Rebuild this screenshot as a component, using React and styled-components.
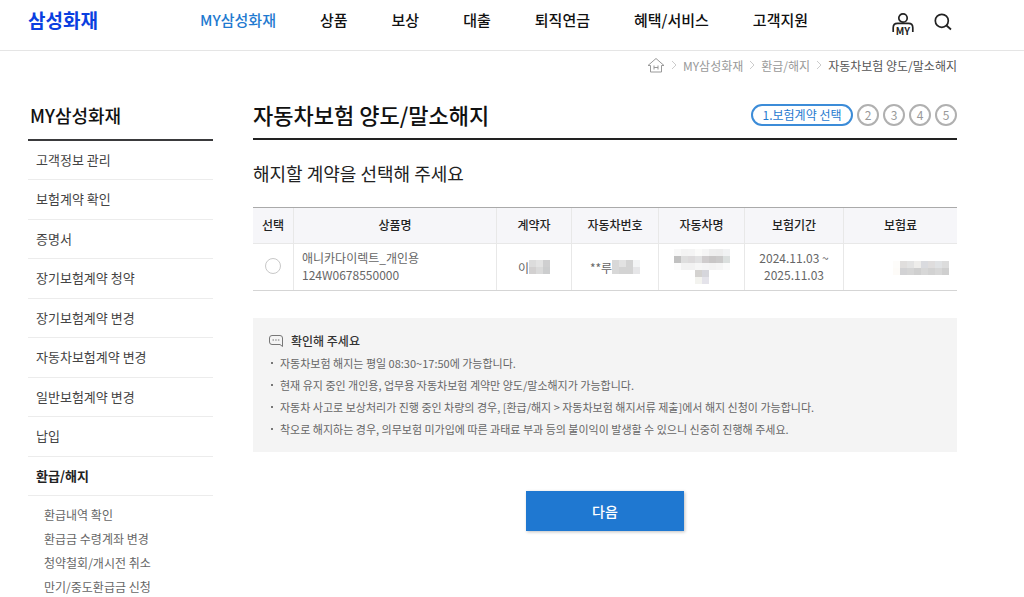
import styled, { createGlobalStyle } from 'styled-components';
import { useState } from 'react';

const navItems = ['MY삼성화재', '상품', '보상', '대출', '퇴직연금', '혜택/서비스', '고객지원'];

const sideMenus = [
  '고객정보 관리',
  '보험계약 확인',
  '증명서',
  '장기보험계약 청약',
  '장기보험계약 변경',
  '자동차보험계약 변경',
  '일반보험계약 변경',
  '납입',
  '환급/해지',
];

const subMenus = ['환급내역 확인', '환급금 수령계좌 변경', '청약철회/개시전 취소', '만기/중도환급금 신청'];

const columns = [
  { name: '선택', width: 40 },
  { name: '상품명', width: 203 },
  { name: '계약자', width: 75 },
  { name: '자동차번호', width: 87 },
  { name: '자동차명', width: 86 },
  { name: '보험기간', width: 99 },
  { name: '보험료', width: 114 },
];

const notices = [
  '자동차보험 해지는 평일 08:30~17:50에 가능합니다.',
  '현재 유지 중인 개인용, 업무용 자동차보험 계약만 양도/말소해지가 가능합니다.',
  '자동차 사고로 보상처리가 진행 중인 차량의 경우, [환급/해지 > 자동차보험 해지서류 제출]에서 해지 신청이 가능합니다.',
  '착오로 해지하는 경우, 의무보험 미가입에 따른 과태료 부과 등의 불이익이 발생할 수 있으니 신중히 진행해 주세요.',
];

// 개인정보 마스킹 (한 칸 = 7px)
const maskOwner = [
  ['#dcdcdc', '#e3e3e3', '#cfcfd0'],
  ['#d2d0d0', '#dadada', '#cccdce'],
];
const maskNumber = [
  ['#d8d8d8', '#e2e2e2', '#d3d3d3', '#f3f4f5'],
  ['#d8d8d8', '#d3d3d3', '#d3d3d3', '#e6e6e8'],
];
const maskCar = [
  ['#f8f8f8', '#f3f3f3', '#f4f4f4', '#fafaf9', '#f5f5f5', '#eeeeee', '#ededed', '#f1f2f3'],
  ['#c1c1c1', '#dedede', '#dcdadb', '#e1e1e2', '#cfcccd', '#c8c6c6', '#cbcaca', '#dbdfde'],
  ['#fbfbfb', '#f2f2f2', '#f2f2f2', '#f6f6f6', '#f4f4f5', '#f3f3f3', '#f5f5f5', '#fafafa'],
  [null, null, null, '#d4d2d0', '#d6d6dc', null, null, null],
  [null, null, null, '#f3f3ef', '#e4e3ea', null, null, null],
];
const maskPrice = [
  ['#fdfcfa', '#e0dedd', '#e3e3e3', '#eeedeb', '#dadbdf', '#dfdddd', '#e0e2e4', '#dcdcdc'],
  ['#fdfbf8', '#d2d2d4', '#d5d5d5', '#cfcfcf', '#d7d7d7', '#d2d2d2', '#d7d7d7', '#cfcfcf'],
];

const Mask = ({ cells }) => (
  <svg width={cells[0].length * 7} height={cells.length * 7} shapeRendering="crispEdges" aria-hidden="true">
    {cells.map((row, y) =>
      row.map((fill, x) => fill && <rect key={`${x}-${y}`} x={x * 7} y={y * 7} width="7" height="7" fill={fill} />)
    )}
  </svg>
);

const ArrowIcon = () => (
  <svg width="6" height="10" viewBox="0 0 6 10" fill="none" stroke="#cccccc" aria-hidden="true">
    <path d="M1 1 5 5 1 9" />
  </svg>
);

const App = () => {
  const [selected, setSelected] = useState(false);

  return (
    <>
      <GlobalStyle />
      <Header>
        <Logo href="#">삼성화재</Logo>
        <Nav>
          {navItems.map((item, index) => (
            <NavLink key={item} href="#" $isActive={index === 0}>{item}</NavLink>
          ))}
        </Nav>
        <IconButtons>
          <IconButton type="button" aria-label="마이페이지">
            <svg width="22" height="30" viewBox="0 0 22 30" fill="none" stroke="#222222" strokeWidth="1.7">
              <circle cx="11" cy="6" r="4.2" />
              <path d="M1.2 20v-4.3q0-4.3 4.3-4.3h11q4.3 0 4.3 4.3V20" />
              <text x="11" y="23" textAnchor="middle" fontSize="10" fontWeight="700" fill="#222222" stroke="none">MY</text>
            </svg>
          </IconButton>
          <IconButton type="button" aria-label="검색">
            <svg width="18" height="30" viewBox="0 0 18 30" fill="none" stroke="#222222" strokeWidth="1.7">
              <circle cx="7.8" cy="8.8" r="6.5" />
              <path d="m12.5 13.5 4.5 4" />
            </svg>
          </IconButton>
        </IconButtons>
      </Header>

      <Breadcrumb aria-label="현재 위치">
        <a href="#" aria-label="홈">
          <svg width="18" height="16" viewBox="0 0 18 16" fill="none" stroke="#999999">
            <path d="M3.5 8.5H1L9 1.5l8 7h-2.5V15h-11z" />
            <path d="M7 8.5v4M11 8.5v4M7 10.5h4" />
          </svg>
        </a>
        <ArrowIcon />
        <CrumbLink href="#">MY삼성화재</CrumbLink>
        <ArrowIcon />
        <CrumbLink href="#">환급/해지</CrumbLink>
        <ArrowIcon />
        <CrumbCurrent>자동차보험 양도/말소해지</CrumbCurrent>
      </Breadcrumb>

      <Content>
        <Sidebar>
          <SideTitle>MY삼성화재</SideTitle>
          <MenuList>
            {sideMenus.map((menu) => (
              <MenuItem key={menu}>
                <MenuLink href="#" $isActive={menu === '환급/해지'}>{menu}</MenuLink>
              </MenuItem>
            ))}
          </MenuList>
          <SubMenuList>
            {subMenus.map((menu) => (
              <li key={menu}><SubMenuLink href="#">{menu}</SubMenuLink></li>
            ))}
          </SubMenuList>
        </Sidebar>

        <Main>
          <TitleRow>
            <PageTitle>자동차보험 양도/말소해지</PageTitle>
            <Steps>
              <CurrentStep aria-current="step">1.보험계약 선택</CurrentStep>
              {[2, 3, 4, 5].map((step) => (
                <Step key={step}>{step}</Step>
              ))}
            </Steps>
          </TitleRow>

          <SectionTitle>해지할 계약을 선택해 주세요</SectionTitle>

          <ContractTable>
            <colgroup>
              {columns.map(({ name, width }) => (
                <Col key={name} $width={width} />
              ))}
            </colgroup>
            <thead>
              <tr>
                {columns.map(({ name }) => (
                  <Th key={name} scope="col">{name}</Th>
                ))}
              </tr>
            </thead>
            <tbody>
              <tr>
                <Td>
                  <Radio
                    type="radio"
                    name="contract"
                    aria-label="애니카다이렉트_개인용 선택"
                    checked={selected}
                    onChange={() => setSelected(true)}
                  />
                </Td>
                <Td $align="left">애니카다이렉트_개인용<br />124W0678550000</Td>
                <Td><Masked>이<Mask cells={maskOwner} /></Masked></Td>
                <Td><Masked>**루<Mask cells={maskNumber} /></Masked></Td>
                <Td><Masked><Mask cells={maskCar} /></Masked></Td>
                <Td>2024.11.03 ~<br />2025.11.03</Td>
                <Td $align="right"><Masked><Mask cells={maskPrice} /></Masked></Td>
              </tr>
            </tbody>
          </ContractTable>

          <Notice>
            <NoticeTitle>
              <svg width="14" height="12" viewBox="0 0 14 12" fill="none" stroke="#777777" aria-hidden="true">
                <path d="M13.5 11.5 11 9.5H3Q.5 9.5 .5 7V3Q.5 .5 3 .5h8q2.5 0 2.5 2.5z" />
                <path d="M3.5 5H5M6.2 5h1.5M8.9 5h1.500" />
              </svg>
              확인해 주세요
            </NoticeTitle>
            <NoticeList>
              {notices.map((notice) => (
                <NoticeItem key={notice}>{notice}</NoticeItem>
              ))}
            </NoticeList>
          </Notice>

          <NextButton type="button">다음</NextButton>
        </Main>
      </Content>
    </>
  );
};

export default App;

const GlobalStyle = createGlobalStyle`
  * {
    box-sizing: border-box;
  }

  body {
    margin: 0;
    background: #ffffff;
    color: #333333;
    font-family: 'Noto Sans CJK KR', sans-serif;
    font-size: 12px;
  }

  a {
    color: inherit;
    text-decoration: none;
  }

  ul,
  ol {
    margin: 0;
    padding: 0;
    list-style: none;
  }

  button {
    font-family: inherit;
    cursor: pointer;
  }

  svg {
    display: block;
    flex-shrink: 0;
  }
`;

const Header = styled.header`
  display: flex;
  align-items: flex-start;
  height: 51px;
  padding: 0 72px 0 28px;
  border-bottom: 1px solid #e5e5e5;
`;

const Logo = styled.a`
  width: 172px;
  color: #0a3fe0;
  font-size: 19px;
  font-weight: 700;
  line-height: 40px;
`;

const Nav = styled.nav`
  display: flex;
  flex: 1;
  gap: 44px;
`;

const NavLink = styled.a`
  color: ${(props) => (props.$isActive ? '#1f7ad0' : '#111111')};
  font-size: 15px;
  font-weight: 500;
  line-height: 40px;
  white-space: nowrap;
`;

const IconButtons = styled.div`
  display: flex;
  gap: 20px;
  padding-top: 12px;
`;

const IconButton = styled.button`
  padding: 0;
  border: none;
  background: none;
`;

const Breadcrumb = styled.nav`
  display: flex;
  align-items: center;
  justify-content: flex-end;
  gap: 6px;
  height: 28px;
  padding-right: 67px;
`;

const CrumbLink = styled.a`
  color: #999999;
`;

const CrumbCurrent = styled.span`
  color: #555555;
`;

const Content = styled.div`
  display: flex;
  align-items: flex-start;
  gap: 40px;
  padding: 0 67px 0 28px;
`;

const Sidebar = styled.aside`
  flex: 0 0 185px;
`;

const SideTitle = styled.h2`
  margin: 0;
  padding: 21px 2px 9px;
  border-bottom: 2px solid #3a3a3c;
  color: #111111;
  font-size: 18px;
  font-weight: 500;
  line-height: 30px;
`;

const MenuList = styled.ul`
  display: flex;
  flex-direction: column;
  min-height: 355px;
`;

const MenuItem = styled.li`
  flex: 1;
  border-bottom: 1px solid #ececec;
`;

const MenuLink = styled.a`
  display: block;
  padding: 8px;
  color: ${(props) => (props.$isActive ? '#222222' : '#444444')};
  font-size: 13px;
  font-weight: ${(props) => (props.$isActive ? 700 : 400)};
  line-height: 22px;
`;

const SubMenuList = styled.ul`
  padding: 7px 16px 0;
`;

const SubMenuLink = styled.a`
  display: block;
  color: #666666;
  line-height: 24px;
`;

const Main = styled.main`
  flex: 1;
  min-width: 0;
`;

const TitleRow = styled.div`
  display: flex;
  align-items: center;
  justify-content: space-between;
  padding: 19px 0 6px;
  border-bottom: 2px solid #222222;
`;

const PageTitle = styled.h1`
  margin: 0;
  padding-bottom: 2px;
  color: #111111;
  font-size: 22px;
  font-weight: 500;
  line-height: 32px;
`;

const Steps = styled.ol`
  display: flex;
  gap: 4px;
`;

const Step = styled.li`
  width: 22px;
  height: 22px;
  border: 2px solid #b0b0b0;
  border-radius: 11px;
  color: #999999;
  line-height: 18px;
  text-align: center;
`;

const CurrentStep = styled(Step)`
  width: 102px;
  border-color: #3c8cd8;
  color: #1f7ad0;
`;

const SectionTitle = styled.h2`
  margin: 18px 0 19px;
  color: #222222;
  font-size: 18px;
  font-weight: 400;
  line-height: 30px;
`;

const ContractTable = styled.table`
  width: 100%;
  border-top: 1px solid #aaaaaa;
  border-bottom: 1px solid #d5d5d5;
  border-spacing: 0;
  table-layout: fixed;
`;

const Col = styled.col`
  width: ${(props) => (props.$width / 704) * 100}%;
`;

const Th = styled.th`
  height: 36px;
  padding: 0 0 2px;
  border-bottom: 1px solid #e8e8e8;
  background: #f6f6f9;
  color: #222222;
  font-weight: 500;

  & + & {
    border-left: 1px solid #e8e8e8;
  }
`;

const Td = styled.td`
  height: 46px;
  padding: 0 8px 2px;
  color: #666666;
  line-height: 17px;
  text-align: ${(props) => props.$align || 'center'};

  & + & {
    border-left: 1px solid #e8e8e8;
  }
`;

const Radio = styled.input`
  display: block;
  width: 16px;
  height: 16px;
  margin: 0 auto;
  border: 1px solid #c8c8c8;
  border-radius: 50%;
  background: #ffffff;
  appearance: none;
  cursor: pointer;

  &:checked {
    border: 5px solid #1f7ad0;
  }
`;

const Masked = styled.span`
  display: inline-flex;
  align-items: center;
  vertical-align: middle;
`;

const Notice = styled.section`
  margin-top: 27px;
  padding: 12px 16px;
  background: #f4f4f4;
`;

const NoticeTitle = styled.h3`
  display: flex;
  align-items: center;
  gap: 8px;
  margin: 0;
  color: #333333;
  font-size: 12px;
  font-weight: 500;
  line-height: 22px;
`;

const NoticeList = styled.ul`
  color: #666666;
  font-size: 11px;
  line-height: 22px;
`;

const NoticeItem = styled.li`
  display: flex;
  align-items: center;

  &::before {
    content: '';
    width: 2px;
    height: 2px;
    margin: 0 7px 0 2px;
    flex-shrink: 0;
    background: #777777;
  }
`;

const NextButton = styled.button`
  display: block;
  width: 158px;
  height: 40px;
  margin: 39px auto 0;
  border: none;
  background: #1f78d1;
  box-shadow: 1px 1px 3px rgba(0, 0, 0, 0.25);
  color: #ffffff;
  font-size: 14px;
  font-weight: 500;
`;
